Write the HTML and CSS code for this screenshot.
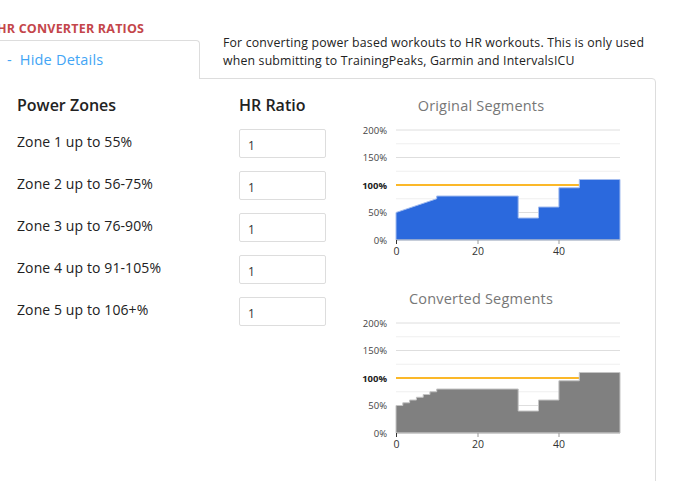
FILE: index.html
```html
<!DOCTYPE html>
<html>
<head>
<meta charset="utf-8">
<link rel="stylesheet" href="styles.css">
</head>
<body>
<div class="page">
  <h2 class="title">HR CONVERTER RATIOS</h2>
  <div class="head">
    <div class="tab"><a class="toggle">-&nbsp; Hide Details</a></div>
    <p class="desc">For converting power based workouts to HR workouts. This is only used<br>when submitting to TrainingPeaks, Garmin and IntervalsICU</p>
  </div>
  <div class="panel">
    <div class="grid">
      <div class="hd">Power Zones</div>
      <div class="hd">HR Ratio</div>
      <div class="charts">
        <div class="chart">
          <div class="ctitle">Original Segments</div>
          <svg class="plot" width="280" height="150" viewBox="0 0 280 150">
            <g class="minor">
              <line x1="40" x2="264" y1="26.75" y2="26.75"/>
              <line x1="40" x2="264" y1="54.25" y2="54.25"/>
              <line x1="40" x2="264" y1="81.75" y2="81.75"/>
              <line x1="40" x2="264" y1="109.25" y2="109.25"/>
            </g>
            <g class="major">
              <line x1="40" x2="264" y1="13" y2="13"/>
              <line x1="40" x2="264" y1="40.5" y2="40.5"/>
              <line x1="40" x2="264" y1="68" y2="68"/>
              <line x1="40" x2="264" y1="95.5" y2="95.5"/>
            </g>
            <line class="ref" x1="40" x2="223.3" y1="68" y2="68"/>
            <polygon class="area blue" points="40,123 40,95.5 80.7,81.75 80.7,79 162.2,79 162.2,101 182.5,101 182.5,90 202.9,90 202.9,70.75 223.3,70.75 223.3,62.5 264,62.5 264,123"/>
            <line class="axis" x1="40" x2="264" y1="123" y2="123"/>
            <g class="ticks">
              <line class="t0" x1="40.5" x2="40.5" y1="123" y2="127"/>
              <line x1="122" x2="122" y1="123" y2="127"/>
              <line x1="203" x2="203" y1="123" y2="127"/>
            </g>
            <g class="ylab">
              <text x="31" y="16.5">200%</text>
              <text x="31" y="44">150%</text>
              <text x="31" y="71.5" class="b">100%</text>
              <text x="31" y="99">50%</text>
              <text x="31" y="126.5">0%</text>
            </g>
            <g class="xlab">
              <text x="40.5" y="138">0</text>
              <text x="122" y="138">20</text>
              <text x="203" y="138">40</text>
            </g>
          </svg>
        </div>
        <div class="chart second">
          <div class="ctitle">Converted Segments</div>
          <svg class="plot" width="280" height="150" viewBox="0 0 280 150">
            <g class="minor">
              <line x1="40" x2="264" y1="26.75" y2="26.75"/>
              <line x1="40" x2="264" y1="54.25" y2="54.25"/>
              <line x1="40" x2="264" y1="81.75" y2="81.75"/>
              <line x1="40" x2="264" y1="109.25" y2="109.25"/>
            </g>
            <g class="major">
              <line x1="40" x2="264" y1="13" y2="13"/>
              <line x1="40" x2="264" y1="40.5" y2="40.5"/>
              <line x1="40" x2="264" y1="68" y2="68"/>
              <line x1="40" x2="264" y1="95.5" y2="95.5"/>
            </g>
            <line class="ref" x1="40" x2="223.3" y1="68" y2="68"/>
            <polygon class="area gray" points="40,123 40,95.5 46.8,95.5 46.8,92.75 53.6,92.75 53.6,90 60.4,90 60.4,87.25 67.2,87.25 67.2,84.5 73.9,84.5 73.9,81.75 80.7,81.75 80.7,79 162.2,79 162.2,101 182.5,101 182.5,90 202.9,90 202.9,70.75 223.3,70.75 223.3,62.5 264,62.5 264,123"/>
            <line class="axis" x1="40" x2="264" y1="123" y2="123"/>
            <g class="ticks">
              <line class="t0" x1="40.5" x2="40.5" y1="123" y2="127"/>
              <line x1="122" x2="122" y1="123" y2="127"/>
              <line x1="203" x2="203" y1="123" y2="127"/>
            </g>
            <g class="ylab">
              <text x="31" y="16.5">200%</text>
              <text x="31" y="44">150%</text>
              <text x="31" y="71.5" class="b">100%</text>
              <text x="31" y="99">50%</text>
              <text x="31" y="126.5">0%</text>
            </g>
            <g class="xlab">
              <text x="40.5" y="138">0</text>
              <text x="122" y="138">20</text>
              <text x="203" y="138">40</text>
            </g>
          </svg>
        </div>
      </div>
      <div class="zone">Zone 1 up to 55%</div>
      <input class="ratio" type="text" value="1">
      <div class="zone">Zone 2 up to 56-75%</div>
      <input class="ratio" type="text" value="1">
      <div class="zone">Zone 3 up to 76-90%</div>
      <input class="ratio" type="text" value="1">
      <div class="zone">Zone 4 up to 91-105%</div>
      <input class="ratio" type="text" value="1">
      <div class="zone">Zone 5 up to 106+%</div>
      <input class="ratio" type="text" value="1">
    </div>
  </div>
</div>
</body>
</html>
```

FILE: styles.css
```css
* { box-sizing: border-box; }
html, body { margin: 0; padding: 0; background: #fff; }
body {
  font-family: "Open Sans", "Noto Sans", sans-serif;
  color: #222;
  overflow: hidden;
  width: 676px;
  height: 481px;
}
.page {
  margin-left: -10px;
  width: 686px;
}
.title {
  margin: 0;
  padding-top: 20px;
  padding-left: 7px;
  height: 40px;
  font-size: 12.5px;
  line-height: 18px;
  font-weight: 700;
  color: #c4464a;
  letter-spacing: 0.2px;
}
.head {
  display: flex;
  align-items: flex-start;
  height: 38px;
}
.tab {
  position: relative;
  z-index: 2;
  width: 210px;
  height: 39px;
  border: 1px solid #ddd;
  border-bottom: none;
  border-top-right-radius: 4px;
  background: #fff;
  padding-left: 16px;
  padding-top: 7px;
}
.toggle {
  font-size: 14.5px;
  line-height: 22px;
  color: #42a5f5;
  letter-spacing: 0.2px;
  cursor: pointer;
}
.desc {
  margin: -6px 0 0 23px;
  font-size: 12.3px;
  line-height: 18px;
  letter-spacing: 0.18px;
  color: #222;
}
.panel {
  width: 666px;
  height: 420px;
  border: 1px solid #ddd;
  border-top-right-radius: 4px;
  padding: 15px 0 0 26px;
}
.grid {
  display: grid;
  grid-template-columns: 222px 117px 290px;
  grid-template-rows: 22px repeat(5, 29px);
  row-gap: 13px;
}
.hd {
  font-size: 16px;
  font-weight: 600;
  line-height: 22px;
  color: #222;
}
.charts {
  grid-column: 3;
  grid-row: 1 / span 6;
  padding-top: 1px;
}
.ctitle {
  width: 250px;
  text-align: center;
  font-size: 14.5px;
  line-height: 22px;
  letter-spacing: 0.2px;
  color: #777;
}
.plot { display: block; }
.second { margin-top: 21px; }
.zone {
  grid-column: 1;
  font-size: 14px;
  line-height: 26px;
  letter-spacing: 0.1px;
  color: #222;
}
.ratio {
  grid-column: 2;
  width: 87px;
  height: 29px;
  border: 1px solid #ddd;
  border-radius: 2px;
  padding: 3px 8px 0 8px;
  margin: 0;
  font-family: "Open Sans", "Noto Sans", sans-serif;
  font-size: 12px;
  color: #333;
  outline: none;
}
.minor line { stroke: #efefef; stroke-width: 1; }
.major line { stroke: #dedede; stroke-width: 1; }
.ref { stroke: #fbb829; stroke-width: 2; }
.area { stroke-width: 1; }
.blue { fill: #2b69dd; stroke: #a4bdef; }
.gray { fill: #808080; stroke: #c4c4c4; }
.axis { stroke: #bbb; stroke-width: 1; }
.ticks line { stroke: #999; stroke-width: 1; }
.ticks line.t0 { stroke: #333; }
.ylab text {
  font-family: "Open Sans", sans-serif;
  font-size: 9.5px;
  fill: #444;
  text-anchor: end;
}
.ylab text.b { font-weight: 700; fill: #222; }
.xlab text {
  font-family: "Open Sans", sans-serif;
  font-size: 10.5px;
  fill: #333;
  text-anchor: middle;
}
```
